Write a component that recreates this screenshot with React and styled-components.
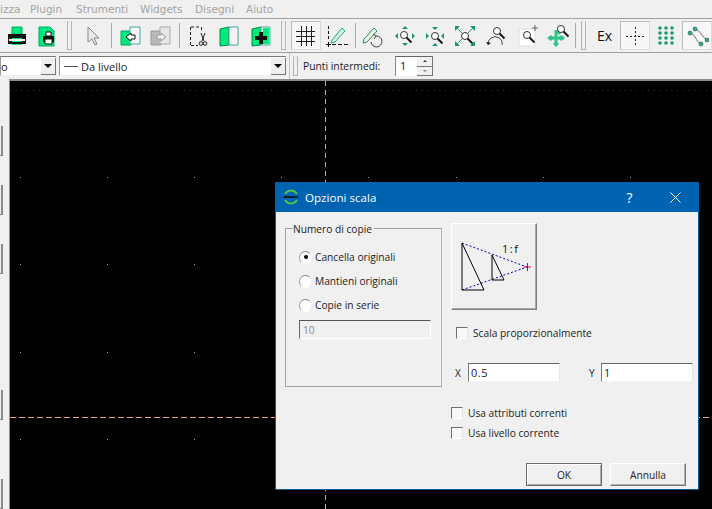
import React from 'react'
import styled, { createGlobalStyle } from 'styled-components'

const Global = createGlobalStyle`
  html, body { margin: 0; padding: 0; background: #f0f0f0; overflow: hidden; }
  body { font-family: "Open Sans", "Liberation Sans", sans-serif; font-size: 11px; color: #1a1a1a; }
`

const Page = styled.div`
  width: 712px;
  height: 509px;
  display: flex;
  flex-direction: column;
  overflow: hidden;
  position: relative;
`

/* menu */
const MenuBar = styled.div`
  height: 18px;
  flex: none;
  display: flex;
  align-items: center;
  color: #a3a3a3;
  font-family: "DejaVu Sans", sans-serif;
  font-size: 10.5px;
  border-bottom: 1px solid #a0a0a0;
  overflow: hidden;
`
const MenuItem = styled.span`
  width: ${p => p.$w}px;
  flex: none;
  white-space: nowrap;
`

/* toolbars */
const Toolbar = styled.div`
  height: 33px;
  flex: none;
  display: flex;
  align-items: center;
  border-bottom: 1px solid #a0a0a0;
  padding-left: 2px;
`
const ToolButton = styled.div`
  width: ${p => p.$w || 30}px;
  height: 29px;
  flex: none;
  display: flex;
  align-items: center;
  justify-content: center;
  font-size: 14px;
  color: #111;
  box-sizing: border-box;
  ${p => p.$active && `
    background: #f7f7f7;
    border: 1px solid #dcdcdc;
    border-top-color: #bcbcbc;
    border-left-color: #bcbcbc;
  `}
`
const Sep = styled.div`
  width: ${p => p.$w || 7}px;
  height: 25px;
  flex: none;
  display: flex;
  justify-content: center;
  &::before { content: ""; width: 1px; background: #a8a8a8; }
`
const Handle = styled.div`
  width: ${p => p.$w}px;
  height: ${p => p.$h || 29}px;
  flex: none;
  display: flex;
  justify-content: center;
  &::before {
    content: "";
    width: 3px;
    height: ${p => (p.$h || 29) - 2}px;
    border: 1px solid #b4b4b4;
    border-top-color: #e0e0e0;
    background: #f0f0f0;
  }
`
const OptionBar = styled.div`
  height: 26px;
  flex: none;
  display: flex;
  align-items: center;
  font-size: 11px;
  color: #1a1a1a;
`
const Combo = styled.div`
  width: ${p => p.$w}px;
  height: 20px;
  flex: none;
  box-sizing: border-box;
  background: #fff;
  border-top: 1px solid #777;
  border-left: 1px solid #999;
  border-bottom: 1px solid #eee;
  display: flex;
  align-items: center;
  overflow: hidden;
  margin-right: 3px;
`
const ComboText = styled.span`
  flex: 1;
  white-space: nowrap;
  display: flex;
  align-items: center;
  gap: 3px;
  padding-left: ${p => p.$pad}px;
`
const LineSample = styled.i`
  width: 14px;
  height: 1px;
  background: #555;
`
const ComboArrow = styled.div`
  width: 15px;
  height: 17px;
  flex: none;
  box-sizing: border-box;
  background: #efefef;
  border-right: 1px solid #777;
  border-bottom: 1px solid #777;
  display: flex;
  align-items: center;
  justify-content: center;
  &::before {
    content: "";
    border-left: 4px solid transparent;
    border-right: 4px solid transparent;
    border-top: 4px solid #000;
  }
`
const BarDivider = styled.div`
  width: 1px;
  height: 26px;
  flex: none;
  background: #c4c4c4;
`
const OptionLabel = styled.span`
  width: 92px;
  flex: none;
  margin-left: 2px;
  font-size: 10.3px;
  white-space: nowrap;
`
const Spin = styled.div`
  width: 38px;
  height: 20px;
  flex: none;
  display: flex;
  box-sizing: border-box;
  background: #fff;
  border-top: 1px solid #666;
  border-left: 1px solid #888;
`
const SpinValue = styled.span`
  flex: 1;
  padding-left: 4px;
  line-height: 18px;
`
const SpinButtons = styled.div`
  width: 16px;
  display: flex;
  flex-direction: column;
`
const SpinButton = styled.div`
  flex: 1;
  background: #f0f0f0;
  border-right: 1px solid #777;
  border-bottom: 1px solid #777;
  display: flex;
  align-items: center;
  justify-content: center;
  &::before {
    content: "";
    border-left: 2px solid transparent;
    border-right: 2px solid transparent;
    ${p => p.$up ? 'border-bottom: 2px solid #333;' : 'border-top: 2px solid #888;'}
  }
`

/* workspace */
const Workspace = styled.div`
  flex: 1;
  display: flex;
  min-height: 0;
`
const LeftDock = styled.div`
  width: 9px;
  flex: none;
  display: flex;
  flex-direction: column;
  overflow: hidden;
`
const DockButton = styled.div`
  width: 3px;
  height: 30px;
  flex: none;
  margin-top: ${p => p.$gap}px;
  box-sizing: border-box;
  border-right: 2px solid #8a8a8a;
  border-bottom: 1px solid #8a8a8a;
`
const Canvas = styled.div`
  flex: 1;
  position: relative;
  background: #000;
  border-top: 2px solid #8c8c8c;
  border-left: 1px solid #8c8c8c;
  overflow: hidden;
`
const GridLayer = styled.svg`
  position: absolute;
  inset: 0;
`

/* dialog */
const Dialog = styled.div`
  position: absolute;
  left: 275px;
  top: 182px;
  width: 424px;
  height: 308px;
  box-sizing: border-box;
  background: #f0f0f0;
  border: 1px solid #0f5a96;
  border-top: 0;
  display: flex;
  flex-direction: column;
  font-family: "Open Sans", "Liberation Sans", sans-serif;
  font-size: 10.2px;
  color: #1c1c1c;
`
const TitleBar = styled.div`
  height: 30px;
  flex: none;
  margin: 0 -1px;
  background: #0063b1;
  color: #fff;
  display: flex;
  align-items: center;
  padding-left: 8px;
  font-size: 11.6px;
`
const TitleText = styled.span`
  margin-left: 6px;
  flex: 1;
`
const TitleHelp = styled.span`
  width: 45px;
  text-align: center;
  font-size: 14px;
`
const TitleClose = styled.span`
  width: 46px;
  margin-right: 1px;
  display: flex;
  justify-content: center;
`
const DialogMain = styled.div`
  display: flex;
  flex: 1;
  padding: 11px 0 0 9px;
  gap: 9px;
  min-height: 0;
`
const Group = styled.div`
  width: 157px;
  height: 159px;
  flex: none;
  margin-top: 5px;
  box-sizing: border-box;
  border: 1px solid #a0a0a0;
  border-right-color: #b4b4b4;
  position: relative;
  padding: 20px 0 0 13px;
  display: flex;
  flex-direction: column;
  gap: 8px;
`
const Legend = styled.span`
  position: absolute;
  left: 7px;
  top: -7px;
  padding-right: 2px;
  background: #f0f0f0;
  line-height: 14px;
`
const OptionRow = styled.label`
  height: 16px;
  display: flex;
  align-items: center;
  gap: 3px;
  white-space: nowrap;
`
const Radio = styled.span`
  width: 11px;
  height: 11px;
  flex: none;
  border-radius: 50%;
  background: #fff;
  border: 1px solid;
  border-color: #8a8a8a #eee #fff #9a9a9a;
  display: flex;
  align-items: center;
  justify-content: center;
  &::before {
    content: "";
    width: 4px;
    height: 4px;
    border-radius: 50%;
    background: ${p => p.$on ? '#000' : 'transparent'};
  }
`
const DisabledInput = styled.div`
  width: 132px;
  height: 19px;
  margin-top: -1px;
  box-sizing: border-box;
  border: 1px solid;
  border-color: #555 #fff #fff #666;
  color: #8a8a8a;
  padding-left: 3px;
  line-height: 18px;
`
const Side = styled.div`
  flex: 1;
  display: flex;
  flex-direction: column;
`
const PictureButton = styled.div`
  width: 86px;
  height: 87px;
  box-sizing: border-box;
  border: 1px solid;
  border-color: #fff #808080 #808080 #fff;
  box-shadow: inset -1px -1px 0 #a8a8a8;
`
const CheckRow = styled.label`
  height: 16px;
  display: flex;
  align-items: center;
  gap: 5px;
  white-space: nowrap;
  margin-left: ${p => p.$left}px;
  margin-top: ${p => p.$top}px;
`
const Check = styled.span`
  width: 12px;
  height: 12px;
  flex: none;
  box-sizing: border-box;
  background: #f8f8f8;
  border: 1px solid;
  border-color: #707070 #e4e4e4 #fff #707070;
`
const Coords = styled.div`
  display: flex;
  align-items: center;
  margin-top: 22px;
  margin-left: 4px;
`
const CoordLabel = styled.span`
  width: ${p => p.$w}px;
  flex: none;
  margin-left: ${p => p.$left || 0}px;
`
const CoordInput = styled.div`
  width: 92px;
  height: 19px;
  flex: none;
  box-sizing: border-box;
  background: #fff;
  border: 1px solid;
  border-color: #666 #e8e8e8 #f4f4f4 #777;
  padding-left: 2px;
  font-size: 11px;
  letter-spacing: 0.5px;
  line-height: 17px;
`
const DialogFooter = styled.div`
  display: flex;
  justify-content: flex-end;
  gap: 8px;
  padding: 0 12px 3px 0;
`
const DialogButton = styled.div`
  width: 76px;
  height: 23px;
  box-sizing: border-box;
  display: flex;
  align-items: center;
  justify-content: center;
  padding-top: 1px;
  border: 1px solid;
  border-color: ${p => p.$primary ? '#6a6a6a' : '#fff #777 #777 #fff'};
  box-shadow: ${p => p.$primary ? 'inset 1px 1px 0 #fff, inset -1px -1px 0 #aaa' : 'inset -1px -1px 0 #b0b0b0'};
`

/* icons */
const G = '#00e97c'
const T = '#1a9a6c'

const Svg = ({ children, w = 24, h = 24 }) => (
  <svg width={w} height={h} viewBox={`0 0 ${w} ${h}`} fill="none">{children}</svg>
)
const PrintIcon = () => (
  <Svg>
    <path d="M7 3h10v7H7z" fill={G} stroke="#0a5" strokeWidth="1" />
    <path d="M3 10h18v9H3z" fill="#111" />
    <path d="M7 14h10v7H7z" fill={G} />
    <path d="M4 15h16v2H4z" fill="#f4f4f4" />
    <path d="M3 18h18v2H3z" fill="#111" />
  </Svg>
)
const PreviewIcon = () => (
  <Svg>
    <path d="M4 3h11l4 4v15H4z" fill={G} stroke="#0a6" />
    <path d="M11 8h5v4h-5z" fill="#fff" stroke="#111" />
    <path d="M8 12h11v6H8z" fill="#111" />
    <path d="M10 15h7v5h-7z" fill="#fff" stroke="#111" />
  </Svg>
)
const PointerIcon = () => (
  <Svg>
    <path d="M8 3v15l4-3 3 6 2-1-3-6h5z" fill="#e8e8e8" stroke="#888" />
  </Svg>
)
const DocArrow = ({ grey, dir }) => (
  <Svg>
    <path d="M2 7h10v14H2z" fill={grey ? '#b8b8b8' : G} stroke={grey ? '#999' : '#0a6'} />
    <path d="M11 3h10v17H11z" fill={grey ? '#e8e8e8' : '#f4f4f4'} stroke={grey ? '#aaa' : '#4a9'} />
    {dir === 'left'
      ? <path d="M7 13l5-4v2h4v4h-4v2z" fill={grey ? '#eee' : '#fff'} stroke={grey ? '#999' : '#111'} />
      : <path d="M17 13l-5-4v2H8v4h4v2z" fill="#eee" stroke="#999" />}
  </Svg>
)
const CutIcon = () => (
  <Svg>
    <path d="M5 3h10M4.500 3v18M5 21.500h7M15.500 3v5" stroke="#222" strokeDasharray="3 2" />
    <path d="M15 9l3 8M19 9l-3 8" stroke="#222" />
    <circle cx="15" cy="19.500" r="1.800" stroke="#222" />
    <circle cx="19" cy="19.500" r="1.800" stroke="#222" />
  </Svg>
)
const BookIcon = ({ plus }) => (
  <Svg>
    <path d="M3 5l9-2v18l-9 1z" fill={G} stroke="#085" />
    <path d="M12 3h9v18h-9z" fill="#f4f4f4" stroke="#4a9" />
    <path d="M14 4h6v16h-6z" fill={G} opacity={plus ? 1 : 0} />
    {plus && <path d="M10 8h4v4h4v4h-4v4h-4v-4H6v-4h4z" fill="#111" />}
  </Svg>
)
const GridIcon = () => (
  <Svg>
    <path d="M2 7.500h19M2 12.500h19M2 17.500h19M7.500 2v20M12.500 2v20M17.500 2v20" stroke="#222" />
  </Svg>
)
const SnapIcon = () => (
  <Svg>
    <path d="M3.500 2v14" stroke="#111" strokeDasharray="3 2" />
    <path d="M1 20.500h22" stroke="#111" strokeDasharray="4 2" />
    <path d="M3.500 18v5M1 20.500h5" stroke="#111" />
    <path d="M7 16L17 4l3 3L10 18l-4 1z" fill="#d4efe2" stroke="#2a7" />
  </Svg>
)
const PencilRotate = () => (
  <Svg>
    <path d="M2 15L12 4l3 3L5 18l-4 1z" fill="#e6f5ee" stroke="#385" />
    <path d="M14 12a5.500 5.500 0 1 1-5 6" stroke="#444" />
    <path d="M11 10l3 2-2 3" stroke="#444" />
  </Svg>
)
const Lens = ({ x = 12, y = 12, r = 3.500 }) => (
  <g>
    <circle cx={x} cy={y} r={r} fill="#fff" stroke="#333" />
    <path d={`M${x + r - 1} ${y + r - 1}l5 5`} stroke="#111" strokeWidth="1.800" />
  </g>
)
const Tri = ({ d }) => <path d={d} fill={T} />
const ZoomAll = () => (
  <Svg>
    <Tri d="M12 2l3 3H9z" /><Tri d="M12 22l3-3H9z" /><Tri d="M2 12l3-3v6z" /><Tri d="M22 12l-3-3v6z" />
    <Lens x={11} y={11} />
  </Svg>
)
const ZoomIn = () => (
  <Svg>
    <Tri d="M12 6l3-3H9z" /><Tri d="M12 19l3 3H9z" /><Tri d="M6 12L3 9v6z" /><Tri d="M18 12l3-3v6z" />
    <Lens />
  </Svg>
)
const ZoomExtent = () => (
  <Svg>
    <Tri d="M2 2h5L2 7z" /><Tri d="M22 2h-5l5 5z" /><Tri d="M2 22h5l-5-5z" /><Tri d="M22 22h-5l5-5z" />
    <path d="M4 4l5 5M20 4l-5 5M4 20l5-5" stroke={T} />
    <Lens />
  </Svg>
)
const ZoomPrev = () => (
  <Svg>
    <Lens x={13} y={7} />
    <path d="M18 21a7 7 0 0 0-11-7 7 7 0 0 0-3 6" stroke="#444" />
    <path d="M2 18l2 3 3-2z" fill="#111" />
  </Svg>
)
const ZoomWindow = () => (
  <Svg>
    <path d="M3 5h16v17H3z" fill="#fff" stroke="#ddd" />
    <Lens x={11} y={11} />
    <path d="M19 1v6M16 4h6" stroke="#666" />
  </Svg>
)
const ZoomPan = () => (
  <Svg>
    <path d="M10 8l3 3 3-3-3-4zM10 23l3-3-3-3-3 3zM1 14l4 3 3-3-3-3zM19 14l-4-3-3 3 3 3z" fill="#2fc48a" />
    <path d="M10 6v15M3 14h15" stroke="#2fc48a" strokeWidth="3" />
    <Lens x={15} y={5} r={3.500} />
  </Svg>
)
const CrossIcon = () => (
  <Svg>
    <path d="M12.500 3v18M3 12.500h18" stroke="#222" strokeDasharray="2 2" />
  </Svg>
)
const DotsIcon = () => (
  <Svg>
    {[4, 9, 14, 19].map(y => [6, 12, 18].map(x => (
      <circle key={`${x}-${y}`} cx={x} cy={y} r="1.800" fill={T} />
    )))}
  </Svg>
)
const SplineIcon = () => (
  <Svg>
    <path d="M5 9C10 9 11 18 16 20M10 5c5 1 7 8 12 11" stroke="#666" />
    {[[5, 9], [10, 5], [22, 16], [16, 20]].map(([x, y]) => (
      <circle key={x} cx={x} cy={y} r="2" fill="#2cb27c" stroke="#135" strokeWidth=".5" />
    ))}
  </Svg>
)
const AppLogo = () => (
  <svg width="16" height="16" viewBox="0 0 16 16" fill="none">
    <path d="M2 5a7 7 0 0 1 12 0M2 11a7 7 0 0 0 12 0" stroke="#4fc04a" strokeWidth="2" />
    <path d="M1 8h14" stroke="#123" strokeWidth="2" />
  </svg>
)
const ScaleDrawing = () => (
  <svg width="84" height="85" viewBox="0 0 84 85" fill="none">
    <path d="M10 19L75 43M10 66L75 43" stroke="#0000c0" strokeDasharray="2 2" />
    <path d="M10 19v47h22zM40 31v25h12z" stroke="#000" />
    <path d="M72 43h7M75.500 39v8" stroke="#e0003c" />
    <text x="50" y="29" fontSize="11" fontFamily="Open Sans, sans-serif" letterSpacing="1.500" fill="#111">1:f</text>
  </svg>
)

const dockGaps = [47, 29, 29, 116, 59]

export default function App() {
  const dotsX = [10, 97, 184, 271, 358, 446, 533, 620]
  const dotsY = [96, 183, 271, 358]
  return (
    <Page>
      <Global />
      <MenuBar>
        <MenuItem $w={30}>izza</MenuItem>
        <MenuItem $w={46}>Plugin</MenuItem>
        <MenuItem $w={64}>Strumenti</MenuItem>
        <MenuItem $w={55}>Widgets</MenuItem>
        <MenuItem $w={51}>Disegni</MenuItem>
        <MenuItem $w={40}>Aiuto</MenuItem>
      </MenuBar>

      <Toolbar>
        <ToolButton><PrintIcon /></ToolButton>
        <ToolButton><PreviewIcon /></ToolButton>
        <Handle $w={15} />
        <ToolButton><PointerIcon /></ToolButton>
        <Sep $w={9} />
        <ToolButton><DocArrow dir="left" /></ToolButton>
        <ToolButton><DocArrow grey dir="right" /></ToolButton>
        <Sep $w={6} />
        <ToolButton $w={31}><CutIcon /></ToolButton>
        <ToolButton $w={32}><BookIcon /></ToolButton>
        <ToolButton $w={31}><BookIcon plus /></ToolButton>
        <Handle $w={15} />
        <ToolButton $active><GridIcon /></ToolButton>
        <ToolButton $w={31}><SnapIcon /></ToolButton>
        <Sep $w={6} />
        <ToolButton $w={31}><PencilRotate /></ToolButton>
        <ToolButton $w={31}><ZoomAll /></ToolButton>
        <ToolButton><ZoomIn /></ToolButton>
        <ToolButton><ZoomExtent /></ToolButton>
        <ToolButton $w={32}><ZoomPrev /></ToolButton>
        <ToolButton $w={31}><ZoomWindow /></ToolButton>
        <ToolButton><ZoomPan /></ToolButton>
        <Sep $w={5} />
        <Handle $w={11} />
        <ToolButton $w={31}>Ex</ToolButton>
        <ToolButton $active><CrossIcon /></ToolButton>
        <ToolButton $w={32}><DotsIcon /></ToolButton>
        <ToolButton $active><SplineIcon /></ToolButton>
      </Toolbar>

      <OptionBar>
        <Combo $w={56}>
          <ComboText $pad={0}>o</ComboText>
          <ComboArrow />
        </Combo>
        <Combo $w={227}>
          <ComboText $pad={4}><LineSample />Da livello</ComboText>
          <ComboArrow />
        </Combo>
        <BarDivider />
        <Handle $w={11} $h={20} />
        <OptionLabel>Punti intermedi:</OptionLabel>
        <Spin>
          <SpinValue>1</SpinValue>
          <SpinButtons><SpinButton $up /><SpinButton /></SpinButtons>
        </Spin>
      </OptionBar>

      <Workspace>
        <LeftDock>
          {dockGaps.map((g, i) => <DockButton key={i} $gap={g} />)}
        </LeftDock>
        <Canvas>
          <GridLayer width="702" height="429">
            <path d="M0 9.500H702" stroke="#333" strokeDasharray="1 4.800" />
            {dotsX.map(x => dotsY.map(y => (
              <rect key={`${x}-${y}`} x={x} y={y} width="1" height="1" fill="#999" />
            )))}
            <path d="M315.500 0V429" stroke="#e5ab66" strokeDasharray="5 4" />
            <path d="M0 336.500H702" stroke="#e5ab66" strokeDasharray="6 3" />
          </GridLayer>
        </Canvas>
      </Workspace>

      <Dialog>
        <TitleBar>
          <AppLogo />
          <TitleText>Opzioni scala</TitleText>
          <TitleHelp>?</TitleHelp>
          <TitleClose>
            <svg width="11" height="11" viewBox="0 0 11 11"><path d="M.5.500l10 10M10.500.500l-10 10" stroke="#fff" /></svg>
          </TitleClose>
        </TitleBar>
        <DialogMain>
          <Group>
            <Legend>Numero di copie</Legend>
            <OptionRow><Radio $on />Cancella originali</OptionRow>
            <OptionRow><Radio />Mantieni originali</OptionRow>
            <OptionRow><Radio />Copie in serie</OptionRow>
            <DisabledInput>10</DisabledInput>
          </Group>
          <Side>
            <PictureButton><ScaleDrawing /></PictureButton>
            <CheckRow $left={5} $top={15}><Check />Scala proporzionalmente</CheckRow>
            <Coords>
              <CoordLabel $w={13}>X</CoordLabel>
              <CoordInput>0.5</CoordInput>
              <CoordLabel $w={12} $left={29}>Y</CoordLabel>
              <CoordInput>1</CoordInput>
            </Coords>
            <CheckRow $left={0} $top={23}><Check />Usa attributi correnti</CheckRow>
            <CheckRow $left={0} $top={4}><Check />Usa livello corrente</CheckRow>
          </Side>
        </DialogMain>
        <DialogFooter>
          <DialogButton $primary>OK</DialogButton>
          <DialogButton>Annulla</DialogButton>
        </DialogFooter>
      </Dialog>
    </Page>
  )
}
